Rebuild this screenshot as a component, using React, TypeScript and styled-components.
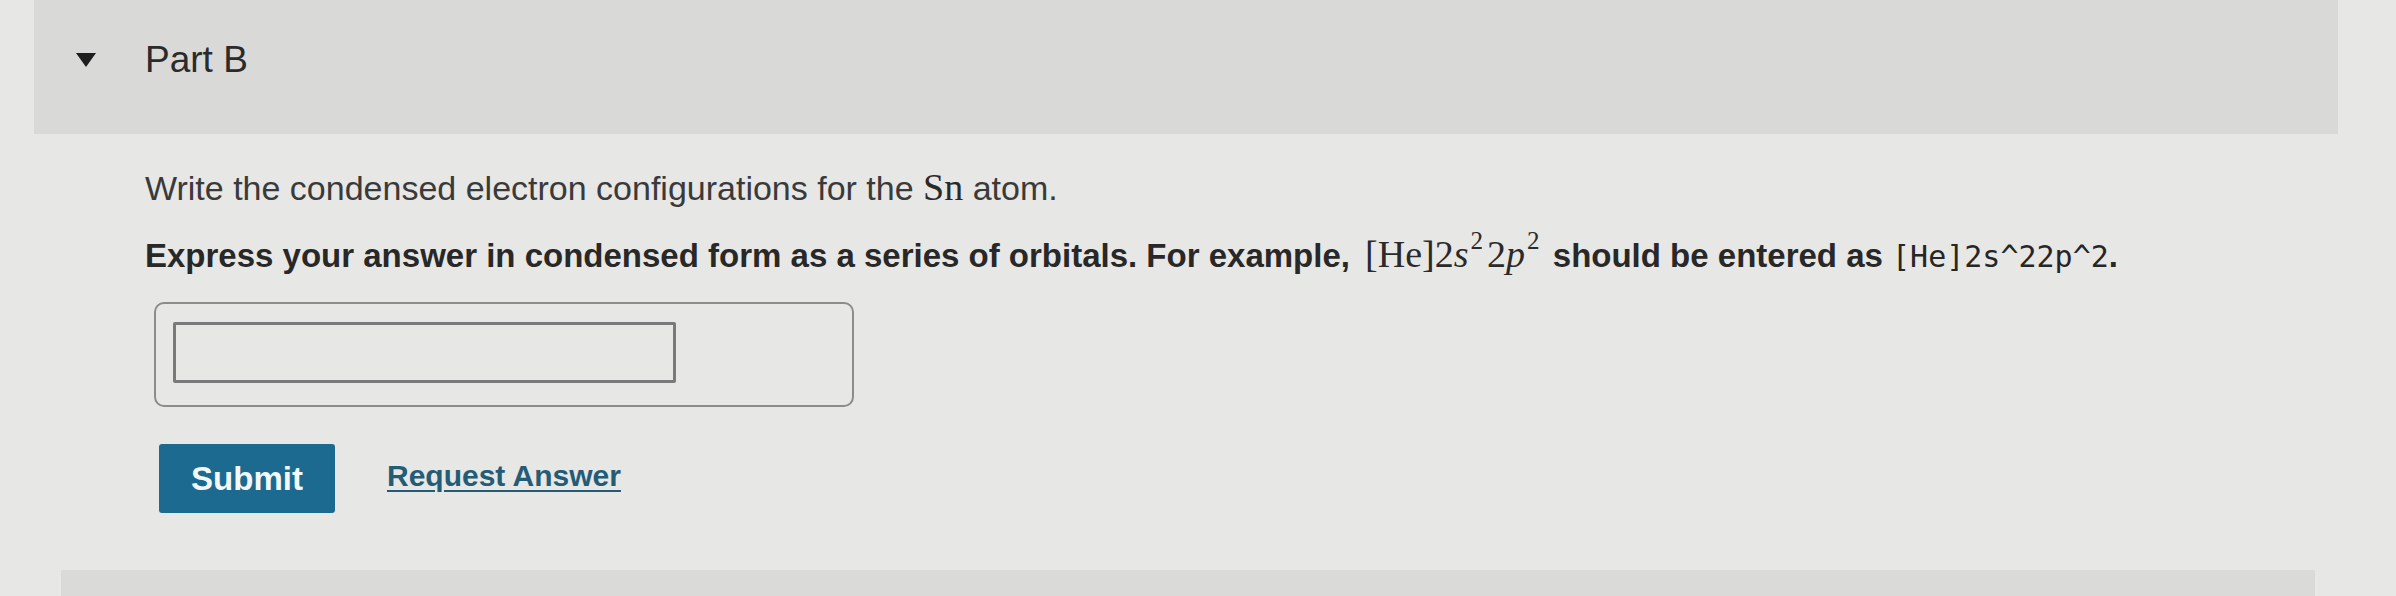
import React from "react";
import styled, { createGlobalStyle } from "styled-components";

const GlobalStyle = createGlobalStyle`
  html, body {
    margin: 0;
    padding: 0;
    background: #e7e7e6;
  }
  body {
    font-family: "Liberation Sans", Arial, sans-serif;
    color: #363636;
  }
`;

const Page = styled.div`
  width: 2396px;
  height: 596px;
  overflow: hidden;
  box-sizing: border-box;
  padding: 0 58px 0 34px;
  display: flex;
  flex-direction: column;
`;

const PartHeader = styled.div`
  height: 134px;
  flex-shrink: 0;
  box-sizing: border-box;
  background: #d9d9d8;
  display: flex;
  align-items: center;
  padding: 0 0 16px 42px;
  gap: 49px;
`;

const Caret = styled.span`
  width: 0;
  height: 0;
  border-left: 10px solid transparent;
  border-right: 10px solid transparent;
  border-top: 14px solid #1e1e1e;
  margin-top: 2px;
`;

const PartTitle = styled.h2`
  margin: 0;
  font-size: 37px;
  font-weight: 400;
  color: #2b2b2b;
  line-height: 1;
`;

const Body = styled.div`
  padding-left: 111px;
  display: flex;
  flex-direction: column;
  flex: 1;
`;

const Prompt = styled.p`
  margin: 34px 0 0;
  font-size: 34px;
  line-height: 38px;
  color: #3a3a3a;
`;

const Instruction = styled.p`
  margin: 28px 0 0;
  font-size: 33px;
  line-height: 38px;
  font-weight: 700;
  color: #282828;
  white-space: nowrap;
`;

const MathText = styled.span<{ $size?: number; $gap?: number }>`
  font-family: "Liberation Serif", "Times New Roman", serif;
  font-weight: 400;
  font-size: ${(p) => p.$size ?? 38}px;
  margin-left: ${(p) => p.$gap ?? 0}px;
  color: #2a2a2a;
`;

const Var = styled.i`
  font-style: italic;
`;

const Sup = styled.sup`
  font-size: 0.66em;
  line-height: 0;
  vertical-align: 0.72em;
  margin: 0 4px 0 2px;
`;

const Code = styled.code`
  font-family: "DejaVu Sans Mono", "Liberation Mono", monospace;
  font-weight: 400;
  font-size: 30px;
  color: #262626;
`;

const AnswerBox = styled.div`
  margin-top: 26px;
  margin-left: 9px;
  width: 700px;
  height: 105px;
  box-sizing: border-box;
  border: 2px solid #8c8c8c;
  border-radius: 10px;
  padding: 18px 0 0 17px;
`;

const AnswerInput = styled.input`
  display: block;
  width: 503px;
  height: 61px;
  box-sizing: border-box;
  border: 3px solid #7a7a7a;
  border-radius: 2px;
  background: transparent;
  outline: none;
`;

const Actions = styled.div`
  margin-top: 37px;
  margin-left: 14px;
  display: flex;
  align-items: center;
  gap: 52px;
`;

const SubmitButton = styled.button`
  width: 176px;
  height: 69px;
  border: none;
  border-radius: 3px;
  background: #1c6a8f;
  color: #f4f8fa;
  font-family: "Liberation Sans", Arial, sans-serif;
  font-size: 33px;
  font-weight: 700;
  cursor: pointer;
`;

const RequestLink = styled.a`
  font-size: 30px;
  font-weight: 700;
  color: #245c75;
  text-decoration: underline;
  text-decoration-thickness: 2px;
  text-underline-offset: 4px;
  cursor: pointer;
  margin-top: -6px;
`;

const NextPart = styled.div`
  margin-top: auto;
  margin-left: -84px;
  margin-right: 23px;
  height: 26px;
  background: #dadad9;
`;

export default function App() {
  return (
    <>
      <GlobalStyle />
      <Page>
        <PartHeader>
          <Caret />
          <PartTitle>Part B</PartTitle>
        </PartHeader>
        <Body>
          <Prompt>
            Write the condensed electron configurations for the{" "}
            <MathText>Sn</MathText> atom.
          </Prompt>
          <Instruction>
            Express your answer in condensed form as a series of orbitals. For
            example,{" "}
            <MathText $gap={6}>
              [He]2<Var>s</Var>
              <Sup>2</Sup>2<Var>p</Var>
              <Sup>2</Sup>
            </MathText>{" "}
            should be entered as <Code>[He]2s^22p^2</Code>.
          </Instruction>
          <AnswerBox>
            <AnswerInput type="text" aria-label="Answer" />
          </AnswerBox>
          <Actions>
            <SubmitButton>Submit</SubmitButton>
            <RequestLink>Request Answer</RequestLink>
          </Actions>
          <NextPart />
        </Body>
      </Page>
    </>
  );
}
